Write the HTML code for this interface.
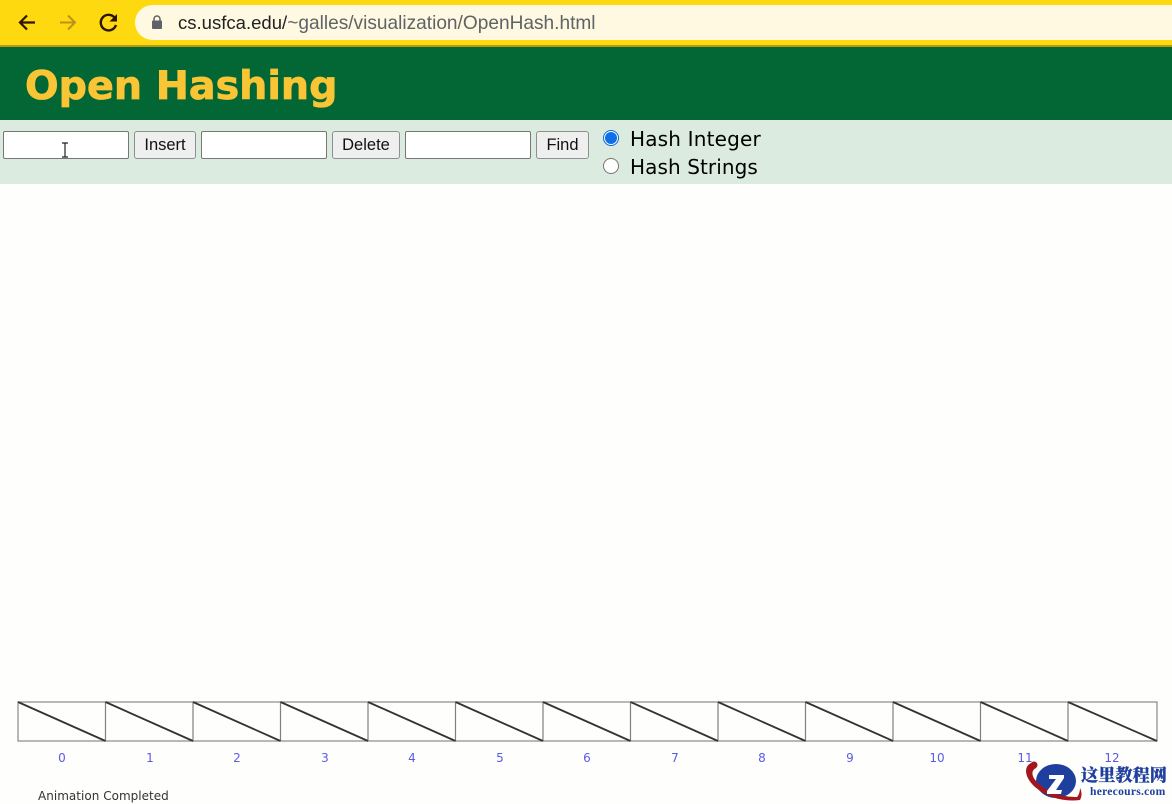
<!DOCTYPE html>
<html><head><meta charset="utf-8">
<style>
*{box-sizing:border-box}
html,body{margin:0;padding:0;width:1172px;height:804px;overflow:hidden;background:#fefefc;position:relative;font-family:"Liberation Sans",sans-serif}
.a{position:absolute}
.inp{position:absolute;top:131px;height:28px;width:126px;background:#fff;border:1px solid #767676;border-radius:2px}
.btn{position:absolute;top:131px;height:28px;background:#efefef;border:1px solid #8f8f8f;border-radius:3px;font-size:16.500px;line-height:26px;text-align:center;color:#111}
.radio{position:absolute;left:603px;width:16px;height:16px;border-radius:50%;background:#fff;border:1px solid #767676}
.lab{position:absolute;left:630px;font:20px/24px "DejaVu Sans",sans-serif;color:#000;white-space:nowrap;letter-spacing:.18px}
.n{position:absolute;top:750px;width:30px;text-align:center;font:12px/16px "DejaVu Sans",sans-serif;color:#5a5ae6}
</style></head><body>
<div class="a" style="left:0;top:0;width:1172px;height:45px;background:#ffd90f"></div>
<div class="a" style="left:0;top:45px;width:1172px;height:2px;background:#b89a10"></div>
<div class="a" style="left:135px;top:5px;width:1037px;height:35px;background:#fff9e2;border-radius:17.500px 0 0 17.500px"></div>
<svg class="a" style="left:0;top:0" width="135" height="45" viewBox="0 0 135 45" fill="none">
<path d="M35 22.500H20M27 15.500l-7 7 7 7" stroke="#2b1600" stroke-width="2.200"/>
<path d="M60 22.500H75M68 15.500l7 7-7 7" stroke="#b8921a" stroke-width="2"/>
<path d="M114.500 17.500A7.800 7.800 0 1 0 116 25" stroke="#2b1600" stroke-width="2.400"/>
<path d="M117 14v7.500h-7.500z" fill="#2b1600"/>
</svg>
<svg class="a" style="left:151px;top:14px" width="12" height="16" viewBox="0 0 12 16">
<path d="M3 7V5a3 3 0 0 1 6 0v2" fill="none" stroke="#5f6368" stroke-width="1.500"/>
<rect x="1" y="6.500" width="10" height="8.500" rx="1" fill="#5f6368"/>
</svg>
<div class="a" style="left:178px;top:11px;font-size:18.550px;line-height:24px;white-space:nowrap;color:#202124">cs.usfca.edu/<span style="color:#5f6368;font-size:19.100px">~galles/visualization/OpenHash.html</span></div>

<div class="a" style="left:0;top:47px;width:1172px;height:73px;background:#036635"></div>
<div class="a" style="left:25px;top:61px;font:bold 39.600px/50px 'DejaVu Sans',sans-serif;color:#f9c535;white-space:nowrap;-webkit-text-stroke:.8px #f9c535">Open Hashing</div>

<div class="a" style="left:0;top:120px;width:1172px;height:64px;background:#dcebdf"></div>
<div class="inp" style="left:3px"></div>
<div class="btn" style="left:134px;width:62px">Insert</div>
<div class="inp" style="left:201px"></div>
<div class="btn" style="left:332px;width:68px">Delete</div>
<div class="inp" style="left:405px"></div>
<div class="btn" style="left:536px;width:53px">Find</div>
<svg class="a" style="left:60px;top:142px" width="10" height="16" viewBox="0 0 10 16" fill="none" stroke="#222" stroke-width="1.200"><path d="M2 1h6M5 1v14M2 15h6"/></svg>
<div class="radio" style="top:130px;border:1px solid #0a66d8"></div>
<div class="a" style="left:605px;top:132px;width:12px;height:12px;border-radius:50%;background:#0f6fe8"></div>
<div class="radio" style="top:158px"></div>
<div class="lab" style="top:127px">Hash Integer</div>
<div class="lab" style="top:155px;letter-spacing:.09px">Hash Strings</div>

<svg class="a" style="left:0;top:695px" width="1172" height="55" viewBox="0 0 1172 55" fill="none">
<rect x="18" y="7" width="1139" height="39" stroke="#8a8a8a" stroke-width="1.200"/>
<g stroke="#808080" stroke-width="1.200">
<path d="M105.500 7v39M193 7v39M280.500 7v39M368 7v39M455.500 7v39M543 7v39M630.500 7v39M718 7v39M805.500 7v39M893 7v39M980.500 7v39M1068 7v39"/>
</g>
<g stroke="#333" stroke-width="1.800">
<path d="M18 7L105.500 46M105.500 7L193 46M193 7L280.500 46M280.500 7L368 46M368 7L455.500 46M455.500 7L543 46M543 7L630.500 46M630.500 7L718 46M718 7L805.500 46M805.500 7L893 46M893 7L980.500 46M980.500 7L1068 46M1068 7L1157 46"/>
</g>
</svg>
<div class="n" style="left:47px">0</div>
<div class="n" style="left:135px">1</div>
<div class="n" style="left:222px">2</div>
<div class="n" style="left:310px">3</div>
<div class="n" style="left:397px">4</div>
<div class="n" style="left:485px">5</div>
<div class="n" style="left:572px">6</div>
<div class="n" style="left:660px">7</div>
<div class="n" style="left:747px">8</div>
<div class="n" style="left:835px">9</div>
<div class="n" style="left:922px">10</div>
<div class="n" style="left:1010px">11</div>
<div class="n" style="left:1097px">12</div>
<div class="a" style="left:38px;top:788px;font:12px/16px 'DejaVu Sans',sans-serif;color:#333;white-space:nowrap;letter-spacing:.02px">Animation Completed</div>

<div class="a" style="left:1000px;top:763px;width:172px;height:41px;background:#fefefc"></div>
<svg class="a" style="left:1020px;top:758px" width="70" height="46" viewBox="0 0 70 46">
<ellipse cx="36" cy="23" rx="20" ry="17" fill="#1f3f9e"/>
<path d="M11 5C3 9 5 20 15 29C28 40 44 44 60 42C62 38 62 34 60 30C60 33 59 37 57 39C43 39 29 35 19 26C12 20 10 13 16 10z" fill="#a3161c"/>
<circle cx="14" cy="7" r="3.500" fill="#a3161c"/>
<path d="M29 17h15v3L36 32h6l-1 4H27v-3l9-12h-7z" fill="#fff"/>
</svg>
<div class="a" style="left:1081px;top:763px;font:900 17.200px/22px 'Noto Serif CJK SC',serif;color:#1f3f9e;white-space:nowrap;-webkit-text-stroke:.2px #1f3f9e">这里教程网</div>
<div class="a" style="left:1090px;top:785px;font:bold 11.600px/14px 'Liberation Serif',serif;color:#1f3f9e;white-space:nowrap;letter-spacing:.25px">herecours.com</div>
</body></html>
